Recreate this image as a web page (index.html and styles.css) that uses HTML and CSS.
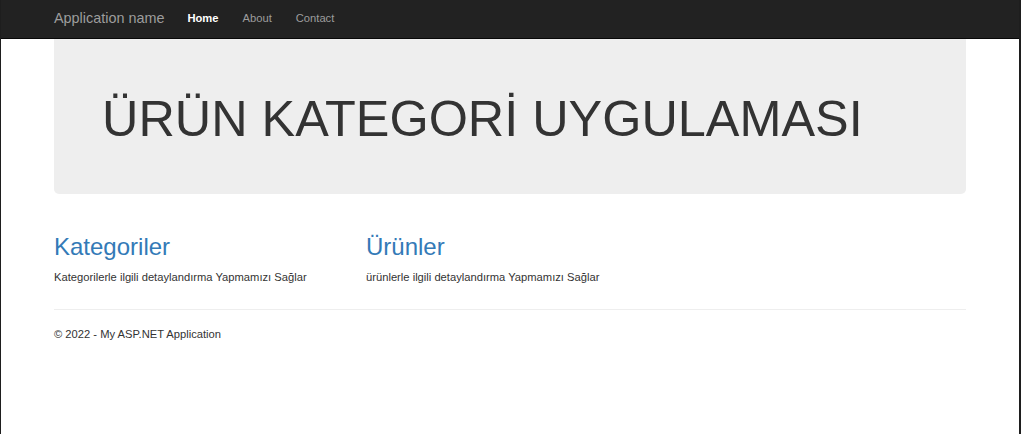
FILE: index.html
```html
<!DOCTYPE html>
<html lang="tr">
<head>
<meta charset="utf-8">
<title>Ürün Kategori Uygulaması</title>
<link rel="stylesheet" href="styles.css">
</head>
<body>
<div class="page">
  <header class="navbar">
    <div class="container nav-inner">
      <a class="brand" href="#">Application name</a>
      <nav class="nav">
        <a class="nav-link active" href="#">Home</a>
        <a class="nav-link" href="#">About</a>
        <a class="nav-link" href="#">Contact</a>
      </nav>
    </div>
  </header>
  <main class="container body-content">
    <section class="jumbotron">
      <h1 class="jumbo-title">ÜRÜN KATEGORİ UYGULAMASI</h1>
    </section>
    <div class="row">
      <div class="col">
        <h2 class="col-title">Kategoriler</h2>
        <p class="col-text">Kategorilerle ilgili detaylandırma Yapmamızı Sağlar</p>
      </div>
      <div class="col">
        <h2 class="col-title">Ürünler</h2>
        <p class="col-text">ürünlerle ilgili detaylandırma Yapmamızı Sağlar</p>
      </div>
      <div class="col"></div>
    </div>
    <hr class="divider">
    <footer class="footer">
      <p class="footer-text">© 2022 - My ASP.NET Application</p>
    </footer>
  </main>
</div>
</body>
</html>
```
FILE: styles.css
```css
* { box-sizing: border-box; }
html, body { margin: 0; padding: 0; }
body {
  font-family: "Liberation Sans", Arial, Helvetica, sans-serif;
  font-size: 11.2px;
  line-height: 16px;
  color: #333;
  background: #1e1e1e;
}
.page {
  min-height: 434px;
  background: #fff;
  margin-left: 1px;
  margin-right: 2px;
}
.container {
  width: 936px;
  margin: 0 auto;
  padding: 0 12px;
}
.navbar {
  background: #222;
  border-bottom: 1px solid #080808;
  height: 39px;
}
.nav-inner {
  display: flex;
  align-items: center;
  height: 38px;
  padding-bottom: 2px;
}
.brand {
  font-size: 14.4px;
  color: #9d9d9d;
  text-decoration: none;
  padding-right: 11px;
  line-height: 16px;
}
.nav { display: flex; }
.nav-link {
  color: #9d9d9d;
  text-decoration: none;
  padding: 0 12px;
  line-height: 16px;
}
.nav-link.active { color: #fff; font-weight: bold; }
.jumbotron {
  background: #eee;
  padding: 36px 48px 40px;
  margin-bottom: 24px;
  border-radius: 0 0 5px 5px;
}
.jumbo-title {
  margin: 16px 0 8px;
  font-size: 50.4px;
  line-height: 55px;
  font-weight: 500;
  color: #333;
}
.row {
  display: grid;
  grid-template-columns: 312px 312px 312px;
  margin: 0 -12px;
}
.col { padding: 0 12px; }
.col-title {
  margin: 16px 0 9px;
  font-size: 24px;
  line-height: 26.4px;
  font-weight: 500;
  color: #337ab7;
}
.col-text { margin: 0 0 8px; }
.divider {
  margin: 16px 0;
  border: 0;
  border-top: 1px solid #eee;
}
.footer-text { margin: 0 0 8px; }
```
